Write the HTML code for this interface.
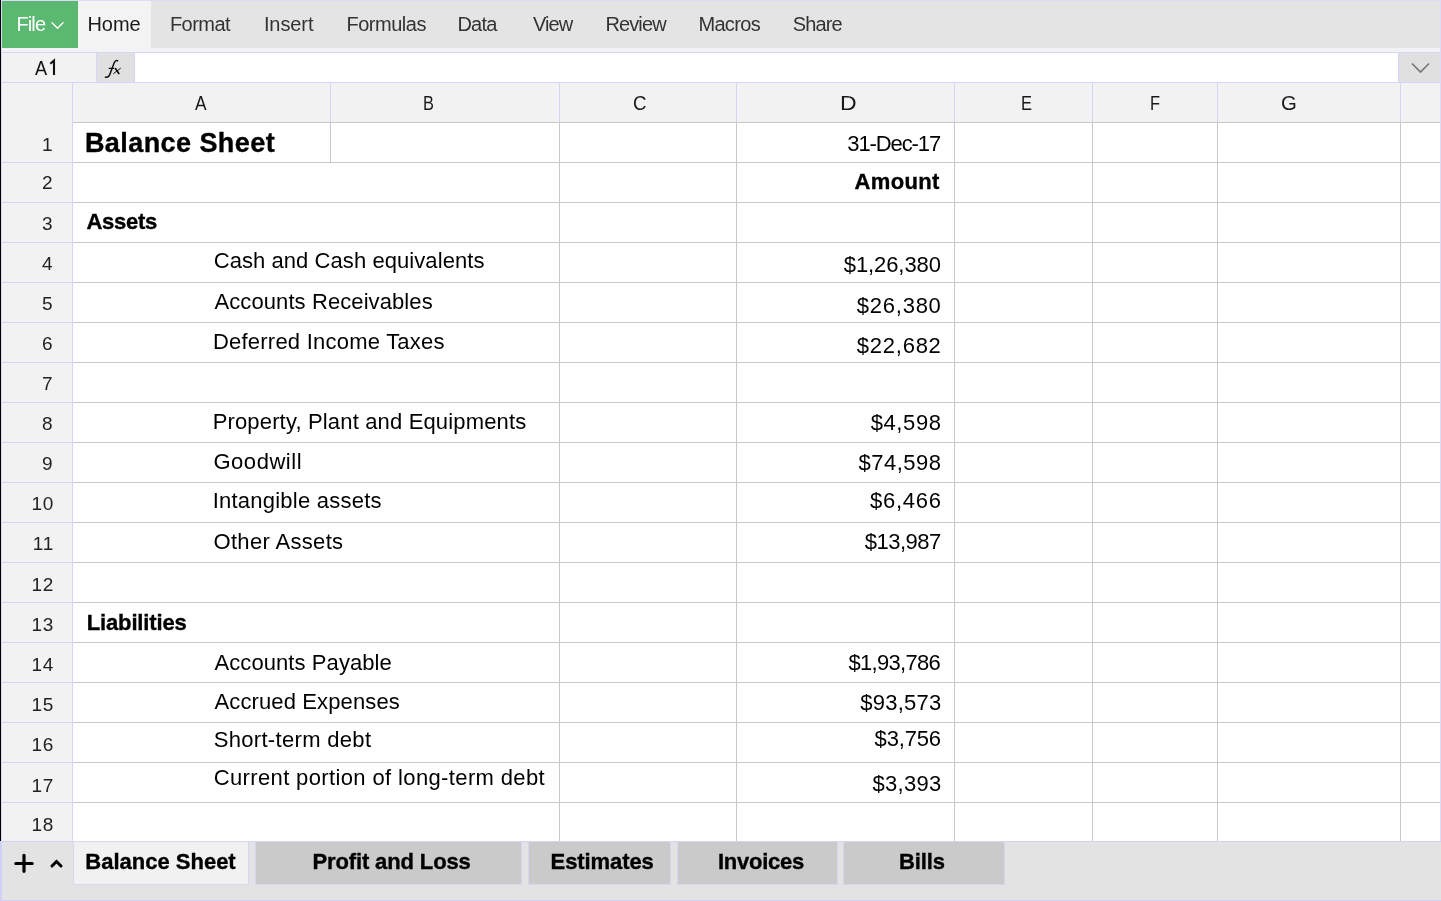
<!DOCTYPE html>
<html><head><meta charset="utf-8">
<style>
*{margin:0;padding:0;box-sizing:border-box}
html,body{width:1441px;height:901px;overflow:hidden;background:#fff;font-family:"Liberation Sans",sans-serif;color:#000}
body{will-change:transform}
div,svg{position:absolute}
.t{white-space:nowrap}
.b{font-weight:bold;-webkit-text-stroke:0.35px #000}
.hl{height:1px;background:#d4d6f8}
.vl{width:1px;background:#d4d6f8}
.gh{height:1px;background:#c8c8c8}
.gv{width:1px;background:#c8c8c8}
.tab{top:841px;height:44px;background:#cacaca;border:1px solid #d6d6f2}
</style></head><body>
<div style="left:0;top:0;width:1441px;height:52px;background:#e4e4e4"></div>
<div style="left:0;top:0;width:1441px;height:1px;background:#dcdcf8"></div>
<div style="left:2px;top:1px;width:76px;height:47px;background:#5ab870"></div>
<div style="left:78px;top:1px;width:73px;height:47px;background:#f3f3f3"></div>
<div style="left:0;top:48px;width:1441px;height:4px;background:#f3f3f3"></div>
<svg style="left:50px;top:19px" width="15" height="12" viewBox="0 0 15 12"><path d="M1.5 3.3 L7.5 9.3 L13.5 3.3" fill="none" stroke="#fff" stroke-width="1.4"/></svg>
<div style="left:0;top:52px;width:1441px;height:31px;background:#fff"></div>
<div class="hl" style="left:0;top:52px;width:1441px"></div>
<div style="left:2px;top:53px;width:94px;height:29px;background:#f2f2f2"></div>
<div style="left:97px;top:53px;width:37px;height:29px;background:#e0e0e0"></div>
<div class="vl" style="left:96px;top:53px;height:29px"></div>
<div class="vl" style="left:134px;top:53px;height:29px"></div>
<svg style="left:48px;top:58px" width="10" height="20" viewBox="0 0 10 20"><path d="M2.3 5.8 L6 2.6 V17" fill="none" stroke="#111" stroke-width="2.1"/></svg>
<svg style="left:100px;top:56px" width="26" height="24" viewBox="0 0 26 24"><g fill="none" stroke="#111" stroke-linecap="round"><path d="M17.6 4.7 C16.4 4.2 15 4.8 14.2 6.8 L9.7 18.8 C9.1 20.5 7.7 21.4 5.4 21.2" stroke-width="1.5"/><path d="M9.2 12.4 H13.7" stroke-width="1.1"/><path d="M15.4 12.6 L18.8 17.5" stroke-width="1.7"/><path d="M20.4 12.4 L13.7 17.5" stroke-width="1.0"/></g></svg>
<div style="left:1398px;top:53px;width:42px;height:29px;background:#e0e0e0"></div>
<div class="vl" style="left:1398px;top:53px;height:29px"></div>
<svg style="left:1411px;top:62px" width="19" height="12" viewBox="0 0 19 12"><path d="M1 1.5 L9.5 10 L18 1.5" fill="none" stroke="#777" stroke-width="1.7"/></svg>
<div class="hl" style="left:0;top:82px;width:1441px"></div>
<div style="left:2px;top:83px;width:1438px;height:39px;background:#f2f2f2"></div>

<div class="vl" style="left:72px;top:83px;height:39px"></div>
<div class="vl" style="left:330px;top:83px;height:39px"></div>
<div class="vl" style="left:559px;top:83px;height:39px"></div>
<div class="vl" style="left:736px;top:83px;height:39px"></div>
<div class="vl" style="left:954px;top:83px;height:39px"></div>
<div class="vl" style="left:1092px;top:83px;height:39px"></div>
<div class="vl" style="left:1217px;top:83px;height:39px"></div>
<div class="vl" style="left:1400px;top:83px;height:39px"></div>
<div style="left:2px;top:122px;width:70px;height:719px;background:#f2f2f2"></div>
<div class="vl" style="left:72px;top:122px;height:719px"></div>
<div class="gh" style="left:73px;top:122px;width:1367px"></div>
<div class="gh" style="left:73px;top:162px;width:1367px"></div>
<div class="hl" style="left:2px;top:162px;width:70px"></div>
<div class="gh" style="left:73px;top:202px;width:1367px"></div>
<div class="hl" style="left:2px;top:202px;width:70px"></div>
<div class="gh" style="left:73px;top:242px;width:1367px"></div>
<div class="hl" style="left:2px;top:242px;width:70px"></div>
<div class="gh" style="left:73px;top:282px;width:1367px"></div>
<div class="hl" style="left:2px;top:282px;width:70px"></div>
<div class="gh" style="left:73px;top:322px;width:1367px"></div>
<div class="hl" style="left:2px;top:322px;width:70px"></div>
<div class="gh" style="left:73px;top:362px;width:1367px"></div>
<div class="hl" style="left:2px;top:362px;width:70px"></div>
<div class="gh" style="left:73px;top:402px;width:1367px"></div>
<div class="hl" style="left:2px;top:402px;width:70px"></div>
<div class="gh" style="left:73px;top:442px;width:1367px"></div>
<div class="hl" style="left:2px;top:442px;width:70px"></div>
<div class="gh" style="left:73px;top:482px;width:1367px"></div>
<div class="hl" style="left:2px;top:482px;width:70px"></div>
<div class="gh" style="left:73px;top:522px;width:1367px"></div>
<div class="hl" style="left:2px;top:522px;width:70px"></div>
<div class="gh" style="left:73px;top:562px;width:1367px"></div>
<div class="hl" style="left:2px;top:562px;width:70px"></div>
<div class="gh" style="left:73px;top:602px;width:1367px"></div>
<div class="hl" style="left:2px;top:602px;width:70px"></div>
<div class="gh" style="left:73px;top:642px;width:1367px"></div>
<div class="hl" style="left:2px;top:642px;width:70px"></div>
<div class="gh" style="left:73px;top:682px;width:1367px"></div>
<div class="hl" style="left:2px;top:682px;width:70px"></div>
<div class="gh" style="left:73px;top:722px;width:1367px"></div>
<div class="hl" style="left:2px;top:722px;width:70px"></div>
<div class="gh" style="left:73px;top:762px;width:1367px"></div>
<div class="hl" style="left:2px;top:762px;width:70px"></div>
<div class="gh" style="left:73px;top:802px;width:1367px"></div>
<div class="hl" style="left:2px;top:802px;width:70px"></div>
<div class="gv" style="left:330px;top:122px;height:40px"></div>
<div class="gv" style="left:559px;top:122px;height:719px"></div>
<div class="gv" style="left:736px;top:122px;height:719px"></div>
<div class="gv" style="left:954px;top:122px;height:719px"></div>
<div class="gv" style="left:1092px;top:122px;height:719px"></div>
<div class="gv" style="left:1217px;top:122px;height:719px"></div>
<div class="gv" style="left:1400px;top:122px;height:719px"></div>
<div style="left:0;top:0;width:1px;height:841px;background:#000"></div>
<div style="left:1px;top:1px;width:1px;height:840px;background:#dcdcf8"></div>
<div style="left:1440px;top:0;width:1px;height:901px;background:#dcdcf8"></div>
<div style="left:0;top:841px;width:1441px;height:60px;background:#e3e3e3"></div>
<div class="hl" style="left:0;top:841px;width:1441px;background:#d0d0f8"></div>
<div class="hl" style="left:0;top:900px;width:1441px;background:#d0d0f8"></div>
<div style="left:0;top:841px;width:2px;height:60px;background:#d0d0f8"></div>
<svg style="left:13px;top:852px" width="22" height="22" viewBox="0 0 22 22"><path d="M2.8 11.5 H19.2 M11 3.3 V19.3" stroke="#000" stroke-width="3.2" stroke-linecap="round" fill="none"/></svg>
<svg style="left:49px;top:857px" width="15" height="12" viewBox="0 0 15 12"><path d="M3 9 L7.5 4.5 L12 9" stroke="#000" stroke-width="3" stroke-linecap="round" fill="none"/></svg>
<div class="tab" style="left:73px;width:176px;background:#f1f1f1"></div>
<div class="tab" style="left:255px;width:267px"></div>
<div class="tab" style="left:528px;width:143px"></div>
<div class="tab" style="left:677px;width:161px"></div>
<div class="tab" style="left:843px;width:162px"></div>

<div class="t" style="left:16.42px;top:14.07px;font-size:20px;line-height:20px;color:#fff;letter-spacing:-0.87px;">File</div>
<div class="t" style="left:87.40px;top:14.07px;font-size:20px;line-height:20px;color:#1a1a1a;">Home</div>
<div class="t" style="left:169.90px;top:14.07px;font-size:20px;line-height:20px;color:#333;letter-spacing:-0.54px;">Format</div>
<div class="t" style="left:263.90px;top:14.07px;font-size:20px;line-height:20px;color:#333;letter-spacing:-0.09px;">Insert</div>
<div class="t" style="left:346.40px;top:14.07px;font-size:20px;line-height:20px;color:#333;letter-spacing:-0.46px;">Formulas</div>
<div class="t" style="left:457.40px;top:14.07px;font-size:20px;line-height:20px;color:#333;letter-spacing:-0.78px;">Data</div>
<div class="t" style="left:532.98px;top:14.07px;font-size:20px;line-height:20px;color:#333;letter-spacing:-0.93px;">View</div>
<div class="t" style="left:605.42px;top:14.07px;font-size:20px;line-height:20px;color:#333;letter-spacing:-0.88px;">Review</div>
<div class="t" style="left:698.38px;top:14.07px;font-size:20px;line-height:20px;color:#333;letter-spacing:-0.65px;">Macros</div>
<div class="t" style="left:792.66px;top:14.07px;font-size:20px;line-height:20px;color:#333;letter-spacing:-0.86px;">Share</div>
<div class="t" style="left:34.96px;top:56.72px;font-size:21px;line-height:21px;color:#111;transform:scaleX(0.865);transform-origin:left center;">A</div>
<div class="t" style="left:195.48px;top:93.37px;font-size:20px;line-height:20px;color:#1a1a1a;transform:scaleX(0.865);transform-origin:left center;">A</div>
<div class="t" style="left:423.20px;top:93.37px;font-size:20px;line-height:20px;color:#1a1a1a;transform:scaleX(0.818);transform-origin:left center;">B</div>
<div class="t" style="left:633.18px;top:93.37px;font-size:20px;line-height:20px;color:#1a1a1a;transform:scaleX(0.935);transform-origin:left center;">C</div>
<div class="t" style="left:840.38px;top:93.37px;font-size:20px;line-height:20px;color:#1a1a1a;transform:scaleX(1.151);transform-origin:left center;">D</div>
<div class="t" style="left:1020.92px;top:93.37px;font-size:20px;line-height:20px;color:#1a1a1a;transform:scaleX(0.826);transform-origin:left center;">E</div>
<div class="t" style="left:1150.20px;top:93.37px;font-size:20px;line-height:20px;color:#1a1a1a;transform:scaleX(0.822);transform-origin:left center;">F</div>
<div class="t" style="left:1281.42px;top:93.37px;font-size:20px;line-height:20px;color:#1a1a1a;transform:scaleX(1.019);transform-origin:left center;">G</div>
<div class="t" style="right:1388.40px;top:134.82px;font-size:19px;line-height:19px;color:#222;">1</div>
<div class="t" style="right:1388.40px;top:172.92px;font-size:19px;line-height:19px;color:#222;">2</div>
<div class="t" style="right:1388.40px;top:213.52px;font-size:19px;line-height:19px;color:#222;">3</div>
<div class="t" style="right:1388.40px;top:253.72px;font-size:19px;line-height:19px;color:#222;">4</div>
<div class="t" style="right:1388.40px;top:293.92px;font-size:19px;line-height:19px;color:#222;">5</div>
<div class="t" style="right:1388.40px;top:334.32px;font-size:19px;line-height:19px;color:#222;">6</div>
<div class="t" style="right:1388.40px;top:373.92px;font-size:19px;line-height:19px;color:#222;">7</div>
<div class="t" style="right:1388.40px;top:413.92px;font-size:19px;line-height:19px;color:#222;">8</div>
<div class="t" style="right:1388.40px;top:453.82px;font-size:19px;line-height:19px;color:#222;">9</div>
<div class="t" style="right:1386.90px;top:494.12px;font-size:19px;line-height:19px;color:#222;letter-spacing:0.80px;">10</div>
<div class="t" style="right:1386.90px;top:534.42px;font-size:19px;line-height:19px;color:#222;letter-spacing:0.80px;">11</div>
<div class="t" style="right:1386.90px;top:574.72px;font-size:19px;line-height:19px;color:#222;letter-spacing:0.80px;">12</div>
<div class="t" style="right:1386.90px;top:614.72px;font-size:19px;line-height:19px;color:#222;letter-spacing:0.80px;">13</div>
<div class="t" style="right:1386.90px;top:654.62px;font-size:19px;line-height:19px;color:#222;letter-spacing:0.80px;">14</div>
<div class="t" style="right:1386.90px;top:694.92px;font-size:19px;line-height:19px;color:#222;letter-spacing:0.80px;">15</div>
<div class="t" style="right:1386.90px;top:735.32px;font-size:19px;line-height:19px;color:#222;letter-spacing:0.80px;">16</div>
<div class="t" style="right:1386.90px;top:775.72px;font-size:19px;line-height:19px;color:#222;letter-spacing:0.80px;">17</div>
<div class="t" style="right:1386.90px;top:814.92px;font-size:19px;line-height:19px;color:#222;letter-spacing:0.80px;">18</div>
<div class="t b" style="left:84.90px;top:129.64px;font-size:27px;line-height:27px;color:#000;letter-spacing:0.43px;">Balance Sheet</div>
<div class="t" style="right:501.00px;top:132.78px;font-size:22px;line-height:22px;color:#000;letter-spacing:-1.12px;">31-Dec-17</div>
<div class="t b" style="right:501.20px;top:170.88px;font-size:22px;line-height:22px;color:#000;letter-spacing:0.36px;">Amount</div>
<div class="t b" style="left:86.46px;top:211.48px;font-size:22px;line-height:22px;color:#000;letter-spacing:-0.29px;">Assets</div>
<div class="t" style="left:213.70px;top:249.88px;font-size:22px;line-height:22px;color:#000;letter-spacing:0.07px;">Cash and Cash equivalents</div>
<div class="t" style="right:500.20px;top:254.18px;font-size:22px;line-height:22px;color:#000;letter-spacing:-0.09px;">$1,26,380</div>
<div class="t" style="left:214.50px;top:290.63px;font-size:22px;line-height:22px;color:#000;letter-spacing:0.09px;">Accounts Receivables</div>
<div class="t" style="right:499.40px;top:294.88px;font-size:22px;line-height:22px;color:#000;letter-spacing:0.75px;">$26,380</div>
<div class="t" style="left:212.90px;top:331.38px;font-size:22px;line-height:22px;color:#000;letter-spacing:0.23px;">Deferred Income Taxes</div>
<div class="t" style="right:499.40px;top:334.88px;font-size:22px;line-height:22px;color:#000;letter-spacing:0.75px;">$22,682</div>
<div class="t" style="left:212.64px;top:410.58px;font-size:22px;line-height:22px;color:#000;letter-spacing:0.16px;">Property, Plant and Equipments</div>
<div class="t" style="right:499.40px;top:411.88px;font-size:22px;line-height:22px;color:#000;letter-spacing:0.61px;">$4,598</div>
<div class="t" style="left:213.44px;top:451.18px;font-size:22px;line-height:22px;color:#000;letter-spacing:0.54px;">Goodwill</div>
<div class="t" style="right:499.40px;top:452.38px;font-size:22px;line-height:22px;color:#000;letter-spacing:0.51px;">$74,598</div>
<div class="t" style="left:212.64px;top:490.38px;font-size:22px;line-height:22px;color:#000;letter-spacing:0.24px;">Intangible assets</div>
<div class="t" style="right:499.40px;top:490.18px;font-size:22px;line-height:22px;color:#000;letter-spacing:0.72px;">$6,466</div>
<div class="t" style="left:213.44px;top:531.28px;font-size:22px;line-height:22px;color:#000;letter-spacing:0.34px;">Other Assets</div>
<div class="t" style="right:500.20px;top:531.48px;font-size:22px;line-height:22px;color:#000;letter-spacing:-0.51px;">$13,987</div>
<div class="t b" style="left:86.68px;top:612.38px;font-size:22px;line-height:22px;color:#000;letter-spacing:-0.13px;">Liabilities</div>
<div class="t" style="left:214.50px;top:652.28px;font-size:22px;line-height:22px;color:#000;letter-spacing:0.08px;">Accounts Payable</div>
<div class="t" style="right:501.00px;top:651.88px;font-size:22px;line-height:22px;color:#000;letter-spacing:-0.72px;">$1,93,786</div>
<div class="t" style="left:214.50px;top:691.48px;font-size:22px;line-height:22px;color:#000;letter-spacing:0.12px;">Accrued Expenses</div>
<div class="t" style="right:499.40px;top:691.58px;font-size:22px;line-height:22px;color:#000;letter-spacing:0.27px;">$93,573</div>
<div class="t" style="left:213.70px;top:729.38px;font-size:22px;line-height:22px;color:#000;letter-spacing:0.32px;">Short-term debt</div>
<div class="t" style="right:500.20px;top:728.38px;font-size:22px;line-height:22px;color:#000;letter-spacing:-0.18px;">$3,756</div>
<div class="t" style="left:213.70px;top:767.48px;font-size:22px;line-height:22px;color:#000;letter-spacing:0.37px;">Current portion of long-term debt</div>
<div class="t" style="right:499.40px;top:773.08px;font-size:22px;line-height:22px;color:#000;letter-spacing:0.32px;">$3,393</div>
<div class="t b" style="left:85.30px;top:850.88px;font-size:22px;line-height:22px;color:#000;">Balance Sheet</div>
<div class="t b" style="left:312.40px;top:850.88px;font-size:22px;line-height:22px;color:#000;letter-spacing:-0.12px;">Profit and Loss</div>
<div class="t b" style="left:550.58px;top:850.88px;font-size:22px;line-height:22px;color:#000;letter-spacing:-0.09px;">Estimates</div>
<div class="t b" style="left:717.92px;top:850.88px;font-size:22px;line-height:22px;color:#000;letter-spacing:-0.24px;">Invoices</div>
<div class="t b" style="left:898.92px;top:850.88px;font-size:22px;line-height:22px;color:#000;letter-spacing:-0.09px;">Bills</div>
</body></html>
